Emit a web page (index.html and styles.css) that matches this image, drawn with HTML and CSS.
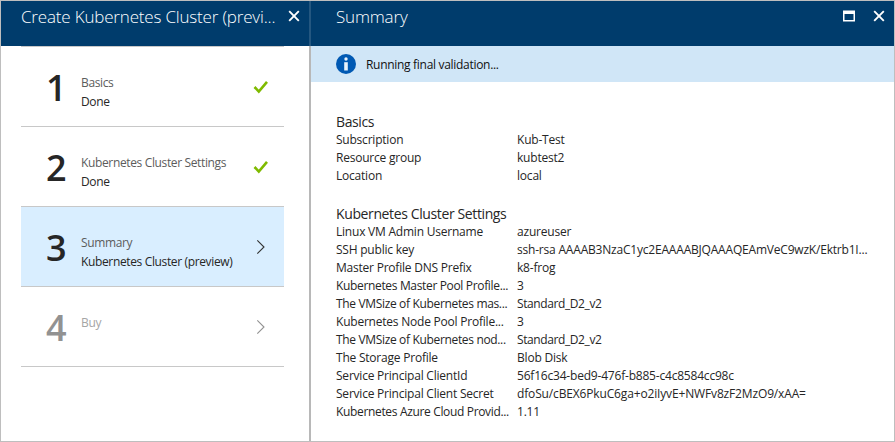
FILE: index.html
```html
<!DOCTYPE html>
<html lang="en">
<head>
<meta charset="utf-8">
<title>Create Kubernetes Cluster</title>
<link rel="stylesheet" href="styles.css">
</head>
<body>
<main class="portal">
  <section class="blade wizard">
    <header class="blade-header">
      <h1 class="title">Create Kubernetes Cluster (previ...</h1>
      <svg class="icon-close" width="12" height="12" viewBox="0 0 12 12"><path d="M1.2 1.2l9.6 9.6M10.8 1.2l-9.6 9.6"/></svg>
    </header>
    <ol class="steps">
      <li class="step">
        <span class="number">1</span>
        <div class="step-text"><div class="step-name">Basics</div><div class="step-status">Done</div></div>
        <svg class="check" width="16" height="14" viewBox="0 0 16 14"><path d="M1.5 7l4.3 4.6L14 1.8"/></svg>
      </li>
      <li class="step">
        <span class="number">2</span>
        <div class="step-text"><div class="step-name">Kubernetes Cluster Settings</div><div class="step-status">Done</div></div>
        <svg class="check" width="16" height="14" viewBox="0 0 16 14"><path d="M1.5 7l4.3 4.6L14 1.8"/></svg>
      </li>
      <li class="step active">
        <span class="number">3</span>
        <div class="step-text"><div class="step-name">Summary</div><div class="step-status">Kubernetes Cluster (preview)</div></div>
        <svg class="chevron" width="16" height="16" viewBox="0 0 16 16"><path d="M4.3 1.3L11 8l-6.7 6.7"/></svg>
      </li>
      <li class="step disabled">
        <span class="number">4</span>
        <div class="step-text"><div class="step-name">Buy</div></div>
        <svg class="chevron" width="16" height="16" viewBox="0 0 16 16"><path d="M4.3 1.3L11 8l-6.7 6.7"/></svg>
      </li>
    </ol>
  </section>
  <section class="blade summary">
    <header class="blade-header">
      <h1 class="title">Summary</h1>
      <svg class="icon-max" width="14" height="12" viewBox="0 0 14 12"><path d="M1 .5h12v11H1zM2.5 4v6h9V4z"/></svg>
      <svg class="icon-close" width="12" height="12" viewBox="0 0 12 12"><path d="M1.2 1.2l9.6 9.6M10.8 1.2l-9.6 9.6"/></svg>
    </header>
    <div class="notice">
      <svg width="20" height="20" viewBox="0 0 20 20"><circle cx="10" cy="10" r="10" fill="#0059b3"/><circle cx="10" cy="5" r="1.7" fill="#e8f2fb"/><path d="M8.2 8.2h3.6v8.3H8.2z" fill="#e8f2fb"/></svg>
      <span>Running final validation...</span>
    </div>
    <div class="details">
      <h2>Basics</h2>
      <dl>
        <dt>Subscription</dt><dd>Kub-Test</dd>
        <dt>Resource group</dt><dd>kubtest2</dd>
        <dt>Location</dt><dd>local</dd>
      </dl>
      <h2>Kubernetes Cluster Settings</h2>
      <dl>
        <dt>Linux VM Admin Username</dt><dd>azureuser</dd>
        <dt>SSH public key</dt><dd>ssh-rsa AAAAB3NzaC1yc2EAAAABJQAAAQEAmVeC9wzK/Ektrb1I...</dd>
        <dt>Master Profile DNS Prefix</dt><dd>k8-frog</dd>
        <dt class="long">Kubernetes Master Pool Profile...</dt><dd>3</dd>
        <dt class="long">The VMSize of Kubernetes mas...</dt><dd class="size">Standard_D2_v2</dd>
        <dt>Kubernetes Node Pool Profile...</dt><dd>3</dd>
        <dt class="long">The VMSize of Kubernetes nod...</dt><dd class="size">Standard_D2_v2</dd>
        <dt>The Storage Profile</dt><dd>Blob Disk</dd>
        <dt>Service Principal ClientId</dt><dd>56f16c34-bed9-476f-b885-c4c8584cc98c</dd>
        <dt>Service Principal Client Secret</dt><dd class="secret">dfoSu/cBEX6PkuC6ga+o2iIyvE+NWFv8zF2MzO9/xAA=</dd>
        <dt class="long">Kubernetes Azure Cloud Provid...</dt><dd>1.11</dd>
      </dl>
    </div>
  </section>
</main>
</body>
</html>
```
FILE: styles.css
```css
* { box-sizing: border-box; }
body {
  margin: 0;
  font-family: "Open Sans", "Noto Sans", sans-serif;
  font-size: 12px;
  line-height: 18px;
  letter-spacing: -0.2px;
  color: #262626;
  background: #fff;
}
h1, h2, dl, dd, ol { margin: 0; padding: 0; }
svg { display: block; flex: none; fill: none; }
.portal {
  display: flex;
  width: 895px;
  height: 442px;
  border: 1px solid #bebebe;
}
.blade { white-space: nowrap; }
.wizard { width: 308px; }
.summary { flex: 1; border-left: 2px solid #b8b8b8; }
.blade-header {
  display: flex;
  height: 45px;
  padding: 5px 9px 0 20px;
  background: #003c6c;
}
.summary .blade-header {
  margin-left: -2px;
  padding-left: 25px;
  border-left: 2px solid #245780;
}
.title {
  flex: 1;
  font-size: 17px;
  line-height: 22px;
  font-weight: 300;
  letter-spacing: -0.18px;
  color: #fff;
}
.icon-close { margin-top: 4px; stroke: #fff; stroke-width: 1.9; }
.icon-max { margin: 4px 17px 0 0; fill: #fff; fill-rule: evenodd; }
.steps { margin: 0 25px 0 20px; list-style: none; border-top: 1px solid #c8c8c8; }
.step {
  display: flex;
  height: 80px;
  padding: 0 15px 0 25px;
  border-bottom: 1px solid #c8c8c8;
}
.active { background: #d9eeff; }
.number {
  width: 35px;
  padding-top: 21px;
  font-size: 36px;
  line-height: 40px;
  font-weight: 600;
  letter-spacing: 0;
}
.step-text { flex: 1; padding-top: 26px; line-height: 19px; letter-spacing: -0.36px; }
.step-name { color: #5c5c5c; }
.check { margin-top: 33px; stroke: #7fba00; stroke-width: 2.6; }
.chevron { margin-top: 32px; stroke: #333; stroke-width: 1.1; }
.disabled .number { color: #929292; }
.disabled .step-name { color: #a5a5a5; }
.disabled .chevron { stroke: #929292; }
.notice {
  display: flex;
  align-items: center;
  gap: 10px;
  height: 36px;
  padding: 0 0 0 25px;
  letter-spacing: -0.3px;
  color: #111;
  background: #d0e6f7;
}
.notice span { padding-top: 2px; }
.details { padding: 31px 0 0 25px; }
h2 { font-size: 14px; line-height: 18px; font-weight: 400; letter-spacing: -0.38px; }
dl { display: grid; grid-template-columns: 181px 1fr; margin-bottom: 20px; }
dt { letter-spacing: -0.22px; }
.long { letter-spacing: -0.34px; }
.size { letter-spacing: -0.4px; }
.secret { letter-spacing: -0.15px; }
```
